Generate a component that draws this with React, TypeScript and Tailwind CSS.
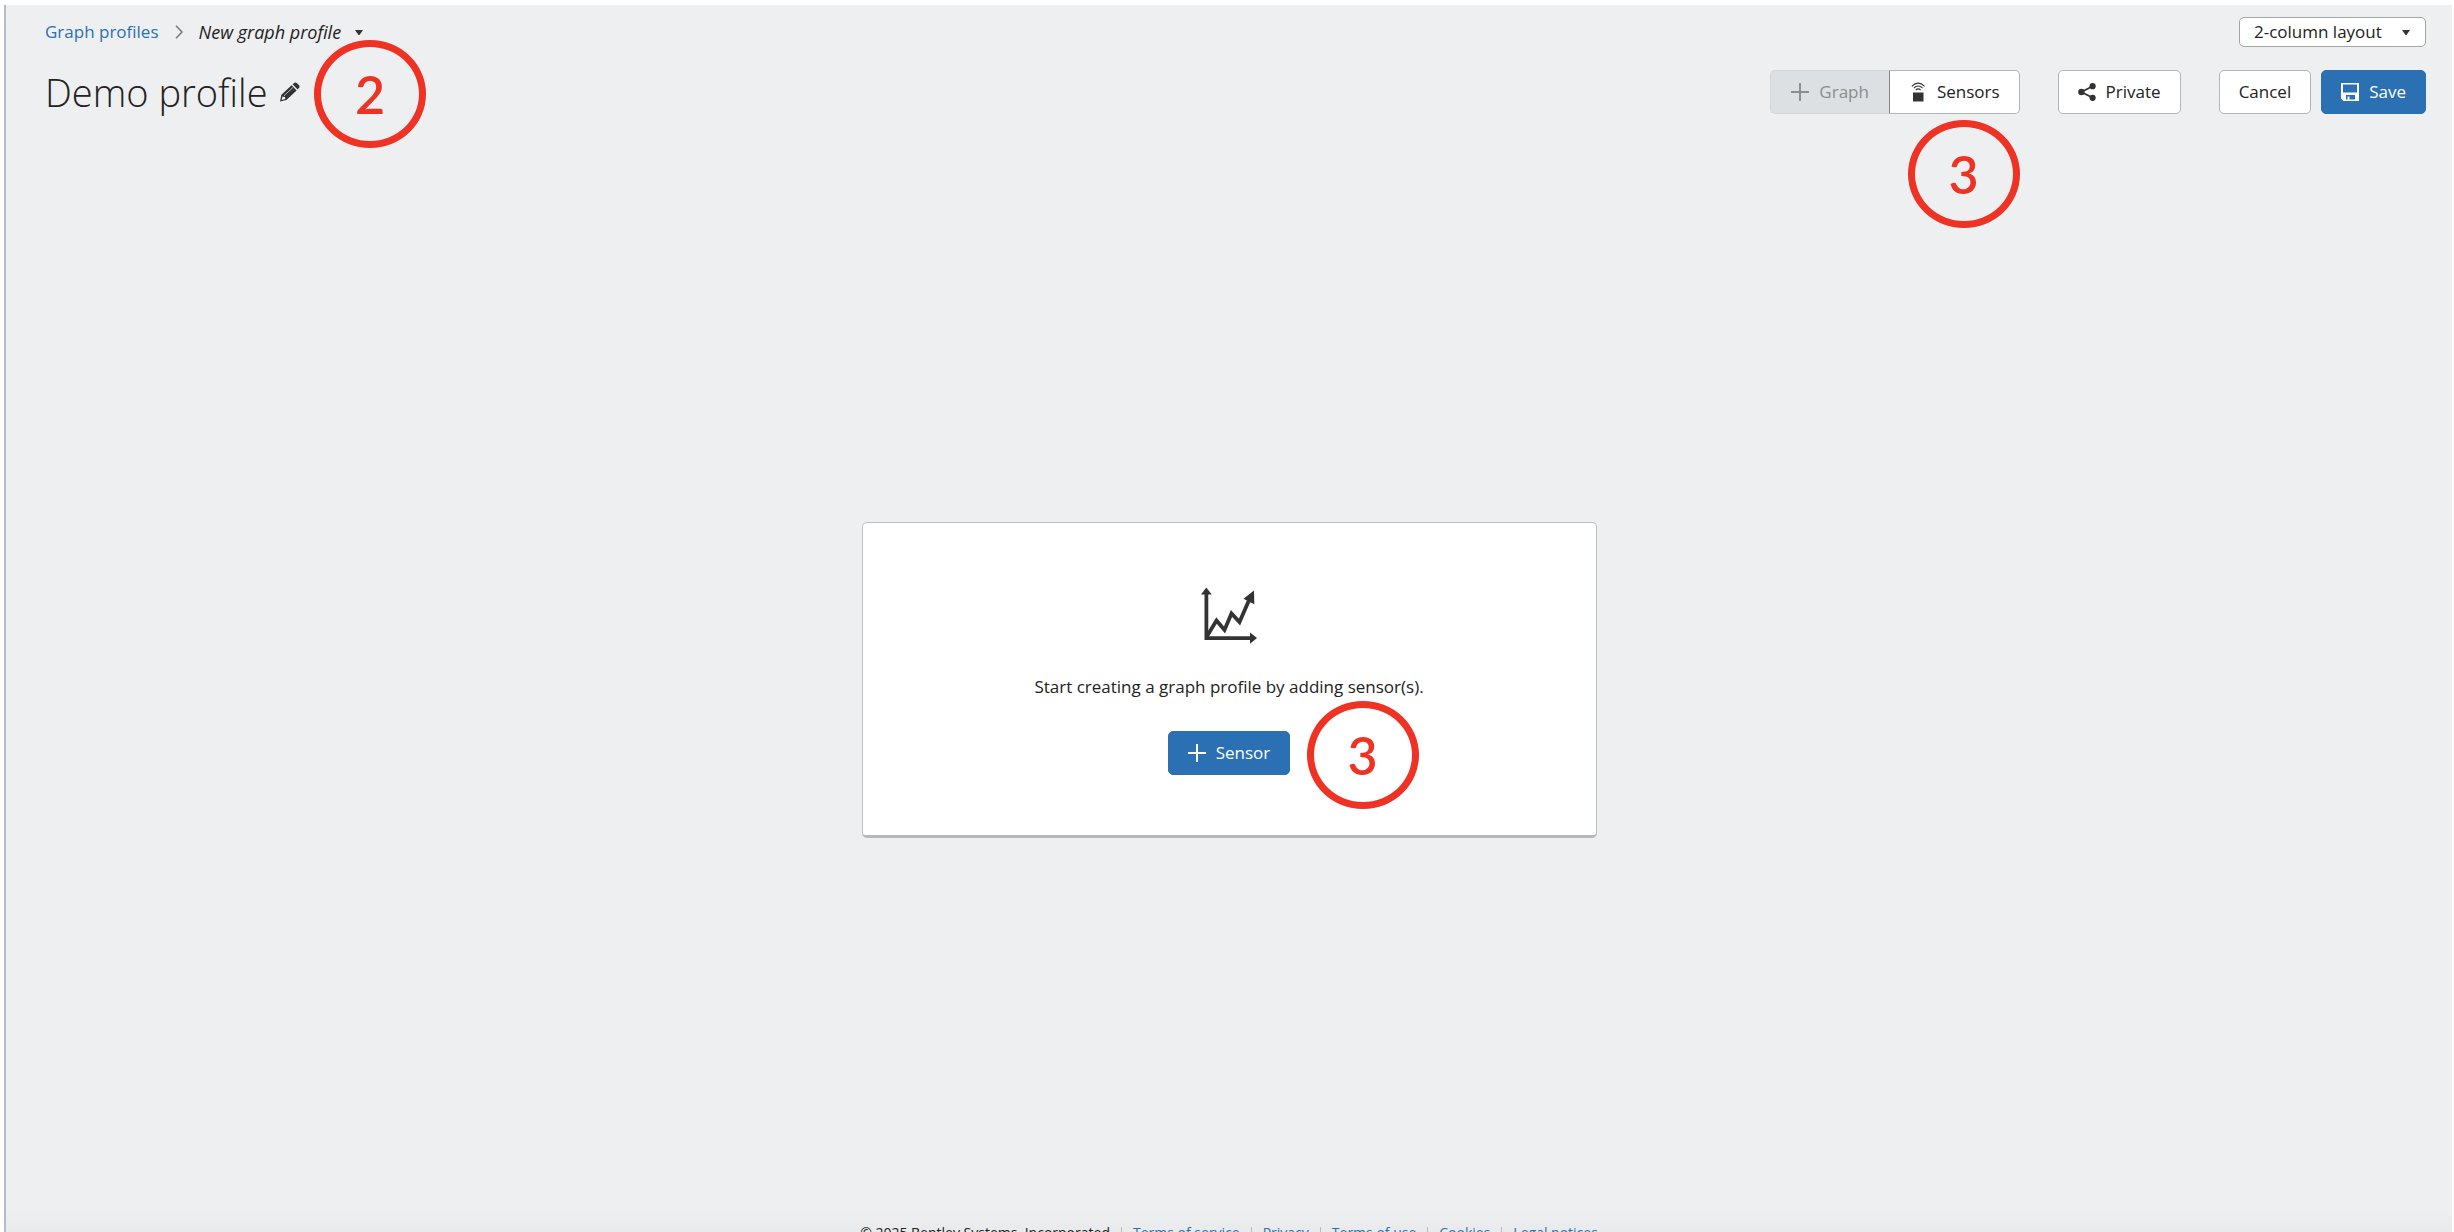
import React from "react";

type IconProps = { className?: string };

const PlusIcon = ({ className = "" }: IconProps) => (
  <svg viewBox="0 0 18 18" className={`size-[18px] shrink-0 ${className}`} fill="currentColor" aria-hidden="true">
    <path d="M8 0h2v8h8v2h-8v8H8v-8H0V8h8z" />
  </svg>
);

const SensorIcon = () => (
  <svg viewBox="0 0 18 20" className="h-5 w-[18px] shrink-0" aria-hidden="true">
    <path d="M4 10.500h10.500v9H4z" fill="#333" />
    <g fill="none" stroke="#333" strokeWidth="1.1">
      <path d="M2.800 4.400Q9.200-2 15.600 4.400" />
      <path d="M4.800 6.200Q9.200 1.800 13.600 6.200" />
      <path d="M6.800 8Q9.200 5.800 11.600 8" />
    </g>
  </svg>
);

const ShareIcon = () => (
  <svg viewBox="0 0 18 18" className="size-[18px] shrink-0" fill="#333" aria-hidden="true">
    <path d="M14.500 3.300 3.500 9l11 5.700" fill="none" stroke="#333" strokeWidth="1.800" />
    <circle cx="3.400" cy="9" r="3.200" />
    <circle cx="14.600" cy="3.200" r="3.100" />
    <circle cx="14.600" cy="14.800" r="3.100" />
  </svg>
);

const SaveIcon = () => (
  <svg viewBox="0 0 18 18" className="size-[18px] shrink-0" aria-hidden="true">
    <path fill="#fff" fillRule="evenodd" d="M0 0h18v18H2.500L0 15.500zM2 1.500v8h14v-8zM5 12v4.500h9V12zM6.500 13.500h2v3h-2z" />
  </svg>
);

const PencilIcon = () => (
  <svg viewBox="0 0 20 20" className="size-5" fill="#333" aria-hidden="true">
    <path d="m12.600 2.300 1.900-1.500q1.100-.8 2.200.1l2.300 2.300q1 1.100.3 2.200l-1.700 2z" />
    <path fillRule="evenodd" d="m11.600 3.200 5 5.200L6.400 17.900 0 19.500l1.400-6.700zM2.600 14.200l-1 3.800 3.700-1-.3-2.100-1.800-.1z" />
    <path d="m4 13.800 9-8.400" stroke="#eeeff1" strokeWidth=".7" />
  </svg>
);

const ChevronIcon = () => (
  <svg viewBox="0 0 8 14" className="h-3.5 w-2" fill="none" stroke="#777" strokeWidth="1.500" aria-hidden="true">
    <path d="m1 .8 6 6.200-6 6.200" />
  </svg>
);

const CaretIcon = () => (
  <svg viewBox="0 0 8 5" className="h-[5px] w-2 shrink-0" fill="#333" aria-hidden="true">
    <path d="M0 0h8L4.500 5h-1z" />
  </svg>
);

const GraphIcon = () => (
  <svg viewBox="0 0 56 57" className="h-[57px] w-14" aria-hidden="true">
    <g fill="#333">
      <path d="m5.300.500 5.500 7H0z" />
      <path d="M3.500 6h3.800v43.200h42.200V53h-46z" />
      <path d="m49 45.500 7 5.600-7 5.600z" />
      <path d="m53 3.500.3 13.800-10.800-5.600z" />
    </g>
    <path d="M5.500 50 15.500 33.500l8 9.500 7-16.500 8 8.500L49 11" fill="none" stroke="#333" strokeWidth="3.800" />
  </svg>
);

const Marker = ({ n, className }: { n: number; className: string }) => (
  <span
    className={`pointer-events-none absolute flex h-[108px] w-28 items-center justify-center rounded-[50%] border-[7px] border-[#ee3224] font-[Lato,sans-serif] text-[52px] leading-none font-semibold text-[#ee3224] ${className}`}
  >
    {n}
  </span>
);

const button = "flex h-11 items-center justify-center rounded-[5px] border px-[19px]";
const plain = "border-[#b3b5b6] bg-white";
const primary = "border-[#2b70b3] bg-[#2b70b3] text-white";

const links = ["Terms of service", "Privacy", "Terms of use", "Cookies", "Legal notices"];

export default function App() {
  return (
    <div className="h-screen overflow-hidden bg-white pt-[5px] pr-0.5 pl-1">
      <div className="flex h-full flex-col border-l-2 border-[#b5bcc5] bg-[#eeeff1] font-['Open_Sans',sans-serif] text-[17px] leading-6 text-[#222]">
        <header className="pr-[26px] pl-[39px]">
          <div className="flex items-center justify-between pt-3">
            <nav aria-label="Breadcrumb" className="flex items-center">
              <a href="#profiles" className="text-[#2b70b3]">Graph profiles</a>
              <span className="mx-4"><ChevronIcon /></span>
              <button type="button" className="flex items-center gap-3.5 text-[18px] italic">
                New graph profile <CaretIcon />
              </button>
            </nav>
            <div className="relative flex items-center">
              <select
                aria-label="Layout"
                className="h-[30px] w-[187px] appearance-none rounded-[5px] border border-[#a2a4a6] bg-white pl-3.5 leading-6"
              >
                <option>2-column layout</option>
              </select>
              <span className="pointer-events-none absolute right-4"><CaretIcon /></span>
            </div>
          </div>

          <div className="mt-[18px] flex items-center justify-between">
            <div className="relative flex items-center gap-3">
              <h1 className="text-[38px] leading-[54px] font-light">Demo profile</h1>
              <button type="button" aria-label="Edit name"><PencilIcon /></button>
              <Marker n={2} className="top-[-25px] left-[269px]" />
            </div>
            <div className="flex items-center">
              <button type="button" disabled className="flex h-11 items-center gap-2.5 rounded-l-[5px] border border-r-0 border-[#d5d8da] bg-[#dce0e3] px-5 text-[#8b8d8f]">
                <PlusIcon /> Graph
              </button>
              <div className="relative">
                <button type="button" className="flex h-11 items-center gap-2.5 rounded-r-[5px] border border-[#b3b5b6] border-l-[#85878a] bg-white px-[19px]">
                  <SensorIcon /> Sensors
                </button>
                <Marker n={3} className="top-[50px] right-0" />
              </div>
              <button type="button" className={`${button} ${plain} ml-[38px] gap-2.5`}>
                <ShareIcon /> Private
              </button>
              <button type="button" className={`${button} ${plain} ml-[38px]`}>Cancel</button>
              <button type="button" className={`${button} ${primary} ml-2.5 gap-2.5`}>
                <SaveIcon /> Save
              </button>
            </div>
          </div>
        </header>

        <main className="flex flex-1 items-center justify-center pt-8">
          <section className="flex h-[316px] w-[735px] flex-col items-center rounded-[5px] border border-b-[3px] border-[#b9c0c9] border-b-[#b6b8ba] bg-white pt-16">
            <GraphIcon />
            <p className="mt-[31px]">Start creating a graph profile by adding sensor(s).</p>
            <div className="relative mt-8">
              <button type="button" className={`${button} ${primary} gap-2.5`}>
                <PlusIcon /> Sensor
              </button>
              <Marker n={3} className="top-[-30px] left-[139px]" />
            </div>
          </section>
        </main>

        <footer className="h-6 shrink-0 overflow-hidden bg-linear-to-b from-[#eeeff1] to-[#e9eaec] text-[14px]">
          <ul className="flex justify-center pt-[19px] leading-3">
            <li className="px-[11px]">© 2025 Bentley Systems, Incorporated</li>
            {links.map((link) => (
              <li key={link} className="border-l border-[#b5bcc5] px-[11px]">
                <a href="#legal" className="text-[#2b70b3]">{link}</a>
              </li>
            ))}
          </ul>
        </footer>
      </div>
    </div>
  );
}
